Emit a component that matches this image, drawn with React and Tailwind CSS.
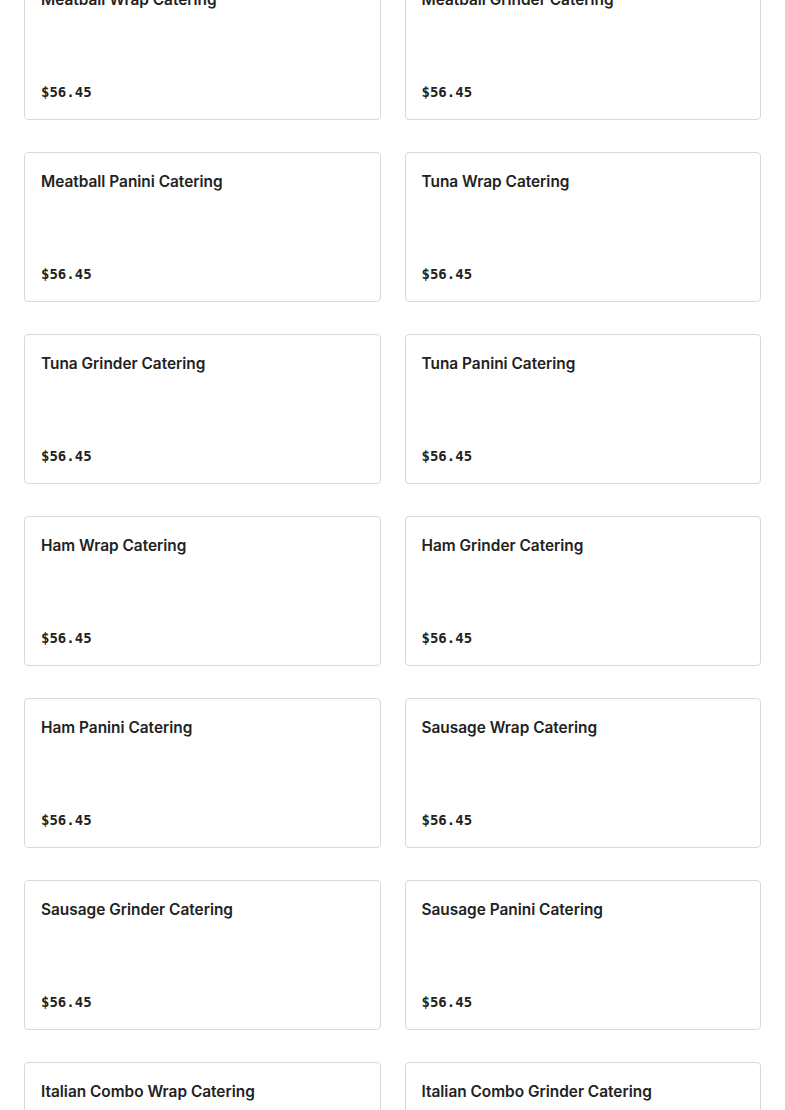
import React from 'react';

const items = [
  'Meatball Wrap Catering',
  'Meatball Grinder Catering',
  'Meatball Panini Catering',
  'Tuna Wrap Catering',
  'Tuna Grinder Catering',
  'Tuna Panini Catering',
  'Ham Wrap Catering',
  'Ham Grinder Catering',
  'Ham Panini Catering',
  'Sausage Wrap Catering',
  'Sausage Grinder Catering',
  'Sausage Panini Catering',
  'Italian Combo Wrap Catering',
  'Italian Combo Grinder Catering',
];

const App = () => {
  return (
    <div className="bg-white min-h-screen overflow-hidden">
      <div className="grid grid-cols-2 gap-x-6 gap-y-8 px-6 -mt-[30px]">
        {items.map((name) => (
          <div
            key={name}
            className="h-[150px] border border-[#d9d9d9] rounded-[4px] bg-white flex flex-col justify-between pt-[17px] px-4 pb-[17px]"
          >
            <h3
              className="text-[15.4px] leading-6 font-semibold text-[#222]"
              style={{ fontFamily: 'Inter, "Noto Sans", sans-serif' }}
            >
              {name}
            </h3>
            <p
              className="text-[14px] leading-5 font-semibold text-[#222]"
              style={{ fontFamily: '"DejaVu Sans Mono", "Liberation Mono", monospace' }}
            >
              $56.45
            </p>
          </div>
        ))}
      </div>
    </div>
  );
};

export default App;
